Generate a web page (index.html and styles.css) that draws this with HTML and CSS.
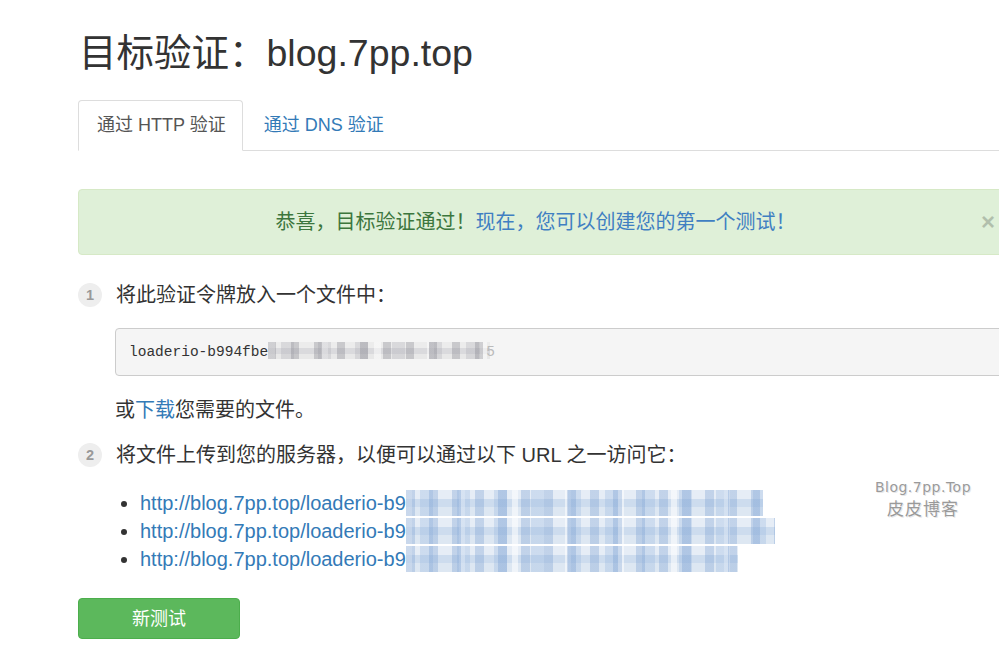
FILE: index.html
```html
<!DOCTYPE html>
<html lang="zh-CN">
<head>
    <meta charset="utf-8">
    <title>目标验证</title>
    <link rel="stylesheet" href="styles.css">
</head>
<body>
    <div class="page">
        <h1 class="title">目标验证：blog.7pp.top</h1>

        <ul class="tabs">
            <li class="tab active"><a href="#">通过 HTTP 验证</a></li>
            <li class="tab"><a href="#">通过 DNS 验证</a></li>
        </ul>

        <div class="alert">
            恭喜，目标验证通过！<a href="#">现在，您可以创建您的第一个测试！</a>
            <button class="close" type="button">×</button>
        </div>

        <div class="step"><span class="badge">1</span><span>将此验证令牌放入一个文件中：</span></div>
        <div class="step-body">
            <pre class="token">loaderio-b994fbe<span class="mosaic grey"></span><span class="tail">5</span></pre>
            <p class="hint">或<a href="#">下载</a>您需要的文件。</p>
        </div>

        <div class="step second"><span class="badge">2</span><span>将文件上传到您的服务器，以便可以通过以下 URL 之一访问它：</span></div>
        <div class="step-body">
            <ul class="urls">
                <li><a href="#">http://blog.7pp.top/loaderio-b9</a><span class="mosaic blue w1"></span></li>
                <li><a href="#">http://blog.7pp.top/loaderio-b9</a><span class="mosaic blue w2"></span></li>
                <li><a href="#">http://blog.7pp.top/loaderio-b9</a><span class="mosaic blue w3"></span></li>
            </ul>
        </div>

        <button class="btn-new" type="button">新测试</button>
    </div>

    <div class="watermark">
        <div class="wm-en">Blog.7pp.Top</div>
        <div class="wm-cn">皮皮博客</div>
    </div>
</body>
</html>
```

FILE: styles.css
```css
html {
    overflow: hidden;
}
body {
    margin: 0;
    font-family: "Liberation Sans", "Noto Sans CJK SC", sans-serif;
    font-size: 20px;
    line-height: 28px;
    color: #333;
    background: #fff;
    position: relative;
}
a {
    color: #337ab7;
    text-decoration: none;
}
.page {
    width: 930px;
    padding-left: 78px;
}
.title {
    margin: 33px 0 0 1px;
    font-size: 37.5px;
    line-height: 40px;
    font-weight: 400;
    color: #333;
}

/* tabs */
.tabs {
    list-style: none;
    margin: 27px 0 0;
    padding: 0;
    display: flex;
    border-bottom: 1px solid #ddd;
}
.tab {
    margin-bottom: -1px;
    margin-right: 2px;
}
.tab a {
    display: block;
    padding: 11px 16px 12px 18px;
    font-size: 18px;
    line-height: 26px;
    border: 1px solid transparent;
    border-radius: 4px 4px 0 0;
}
.tab.active a {
    color: #555;
    background: #fff;
    border-color: #ddd;
    border-bottom-color: transparent;
}

/* alert */
.alert {
    position: relative;
    margin-top: 38px;
    padding: 18px 35px 18px 20px;
    background: #dff0d8;
    border: 1px solid #d6e9c6;
    border-radius: 4px;
    color: #3c763d;
    text-align: center;
}
.alert a {
    color: #3f7fc2;
}
.close {
    position: absolute;
    right: 12px;
    top: 18px;
    padding: 0;
    border: 0;
    background: none;
    font-family: "Liberation Sans", sans-serif;
    font-size: 24px;
    font-weight: 700;
    line-height: 28px;
    color: #000;
    opacity: .2;
    cursor: pointer;
}

/* steps */
.step {
    display: flex;
    align-items: center;
    margin-top: 26px;
}
.step.second {
    margin-top: 17px;
}
.badge {
    width: 24px;
    height: 24px;
    margin-right: 14px;
    border-radius: 50%;
    background: #eee;
    color: #999;
    font-size: 14.5px;
    font-weight: 700;
    line-height: 24px;
    text-align: center;
}
.step-body {
    margin-left: 37px;
}
.token {
    margin: 19px 0 0;
    padding: 13px;
    background: #f5f5f5;
    border: 1px solid #ccc;
    border-radius: 4px;
    font-family: "Liberation Mono", monospace;
    font-size: 14.5px;
    line-height: 20px;
    color: #333;
}
.token .tail {
    color: #bbb;
    margin-left: -4px;
}
.hint {
    margin: 20px 0 0;
}

/* pixelated (hidden) part of the token */
.mosaic {
    display: inline-block;
    vertical-align: middle;
}
.mosaic.grey {
    width: 222px;
    height: 17px;
    margin-top: -3px;
    background:
        repeating-linear-gradient(90deg, rgba(120,120,130,.3) 0 8px, transparent 8px 23px),
        repeating-linear-gradient(90deg, transparent 0 13px, rgba(160,160,170,.25) 13px 26px, transparent 26px 37px),
        repeating-linear-gradient(90deg, rgba(255,255,255,.5) 0 7px, transparent 7px 53px),
        linear-gradient(#ececec 0 35%, #dadadd 35% 70%, #e8e8e8 70%);
}
.mosaic.blue {
    height: 26px;
    margin-top: -4px;
    background:
        repeating-linear-gradient(90deg, rgba(110,150,205,.3) 0 9px, transparent 9px 23px),
        repeating-linear-gradient(90deg, transparent 0 14px, rgba(140,175,220,.28) 14px 27px, transparent 27px 37px),
        repeating-linear-gradient(90deg, rgba(255,255,255,.55) 0 6px, transparent 6px 53px),
        linear-gradient(#e6edf6 0 33%, #cddcee 33% 66%, #dde7f2 66%);
}
.mosaic.w1 { width: 357px; }
.mosaic.w2 { width: 369px; }
.mosaic.w3 { width: 332px; }

.urls {
    margin: 20px 0 0;
    padding-left: 25px;
}
.urls li {
    line-height: 28px;
}

.btn-new {
    display: block;
    margin-top: 25px;
    width: 162px;
    height: 41px;
    padding: 0 0 3px;
    background: #5cb85c;
    border: 1px solid #4cae4c;
    border-radius: 4px;
    color: #fff;
    font-family: "Liberation Sans", "Noto Sans CJK SC", sans-serif;
    font-size: 18px;
    cursor: pointer;
}

/* watermark over the page */
.watermark {
    position: absolute;
    left: 866px;
    top: 477px;
    width: 114px;
    text-align: center;
    color: #9a9a9a;
    text-shadow: 0 0 1px #fff, 1px 1px 0 #e6e6e6;
}
.wm-en {
    font-family: "DejaVu Sans", sans-serif;
    font-size: 14px;
    line-height: 20px;
    letter-spacing: .5px;
}
.wm-cn {
    font-family: "Noto Sans CJK SC", sans-serif;
    font-size: 17px;
    line-height: 22px;
    letter-spacing: 1px;
}
```
